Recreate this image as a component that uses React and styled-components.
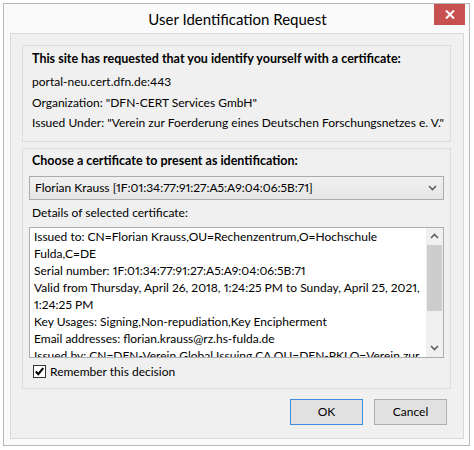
import React, { useState } from "react";
import styled, { createGlobalStyle } from "styled-components";

const GlobalStyle = createGlobalStyle`
  html, body {
    margin: 0;
    padding: 0;
    background: #ffffff;
  }
  body {
    font-family: Lato, "Open Sans", sans-serif;
    font-size: 12px;
    font-variant-numeric: proportional-nums;
    color: #000;
  }
`;

// only the lines that are visible in the details box
const details = [
  "Issued to: CN=Florian Krauss,OU=Rechenzentrum,O=Hochschule",
  "Fulda,C=DE",
  "Serial number: 1F:01:34:77:91:27:A5:A9:04:06:5B:71",
  "Valid from Thursday, April 26, 2018, 1:24:25 PM to Sunday, April 25, 2021,",
  "1:24:25 PM",
  "Key Usages: Signing,Non-repudiation,Key Encipherment",
  "Email addresses: florian.krauss@rz.hs-fulda.de",
  "Issued by: CN=DFN-Verein Global Issuing CA,OU=DFN-PKI,O=Verein zur",
];

function Chevron({ up }) {
  return (
    <svg width="9" height="6" viewBox="0 0 9 6">
      <polyline
        points={up ? "1,5 4.5,1.5 8,5" : "1,1 4.5,4.5 8,1"}
        fill="none"
        stroke="#606060"
        strokeWidth="1.6"
      />
    </svg>
  );
}

function App() {
  const [remember, setRemember] = useState(true);
  return (
    <>
      <GlobalStyle />
      <Page>
        <Window>
          <TitleBar>
            <span />
            <Title>User Identification Request</Title>
            <CloseButton aria-label="Close">
              <svg width="10" height="9" viewBox="0 0 10 9">
                <path d="M1 0.5 L9 8.5 M9 0.5 L1 8.5" stroke="#fff" strokeWidth="2" />
              </svg>
            </CloseButton>
          </TitleBar>
          <Client>
            <Group>
              <Heading>This site has requested that you identify yourself with a certificate:</Heading>
              <InfoList>
                <Info>portal-neu.cert.dfn.de:443</Info>
                <Info>Organization: "DFN-CERT Services GmbH"</Info>
                <Info>Issued Under: "Verein zur Foerderung eines Deutschen Forschungsnetzes e. V."</Info>
              </InfoList>
            </Group>
            <Group $second>
              <Heading $inset>Choose a certificate to present as identification:</Heading>
              <Select>
                <span>Florian Krauss [1F:01:34:77:91:27:A5:A9:04:06:5B:71]</span>
                <Chevron />
              </Select>
              <Label>Details of selected certificate:</Label>
              <DetailsBox>
                <DetailsText>
                  {details.map((line, i) => (
                    <div key={i}>{line}</div>
                  ))}
                </DetailsText>
                <ScrollBar>
                  <ScrollArrow>
                    <Chevron up />
                  </ScrollArrow>
                  <ScrollTrack>
                    <Thumb />
                  </ScrollTrack>
                  <ScrollArrow>
                    <Chevron />
                  </ScrollArrow>
                </ScrollBar>
              </DetailsBox>
              <CheckRow onClick={() => setRemember(!remember)}>
                <CheckBox>
                  {remember && (
                    <svg width="11" height="11" viewBox="0 0 11 11">
                      <polyline points="1.8,5.6 4.3,8.2 9.2,2.2" fill="none" stroke="#000" strokeWidth="2.1" />
                    </svg>
                  )}
                </CheckBox>
                <CheckLabel>Remember this decision</CheckLabel>
              </CheckRow>
            </Group>
            <ButtonRow>
              <Button $primary>OK</Button>
              <Button>Cancel</Button>
            </ButtonRow>
          </Client>
        </Window>
      </Page>
    </>
  );
}

const Page = styled.div`
  padding: 3px 0 0 3px;
`;

const Window = styled.div`
  box-sizing: border-box;
  width: 467px;
  height: 443px;
  border: 1px solid #b9b9b9;
  background: #fafafa;
  display: flex;
  flex-direction: column;
  padding: 0 5px 6px 6px;
`;

const TitleBar = styled.div`
  display: grid;
  grid-template-columns: 1fr auto 1fr;
  height: 29px;
  margin-right: -1px;
`;

const Title = styled.div`
  font-size: 15px;
  line-height: 29px;
  padding-top: 1px;
  color: #000;
`;

const CloseButton = styled.div`
  justify-self: end;
  align-self: start;
  width: 31px;
  height: 21px;
  background: #c75050;
  display: flex;
  align-items: center;
  justify-content: center;
`;

const Client = styled.div`
  flex: 1;
  min-width: 0;
  border: 1px solid #d9d9d9;
  background: #f0f0f0;
  padding: 11px 12px 0 11px;
  display: flex;
  flex-direction: column;
`;

const Group = styled.div`
  border: 1px solid #dcdcdc;
  display: flex;
  flex-direction: column;
  min-width: 0;
  overflow: hidden;
  padding: ${(p) => (p.$second ? "3px 6px 8px 6px" : "4px 9px 7px 9px")};
  margin-top: ${(p) => (p.$second ? "6px" : "0")};
`;

const Heading = styled.div`
  font-weight: bold;
  font-size: 12.5px;
  line-height: 18px;
  white-space: nowrap;
  padding-left: ${(p) => (p.$inset ? "3px" : "0")};
`;

const InfoList = styled.div`
  margin-top: 4px;
  display: flex;
  flex-direction: column;
`;

const Info = styled.div`
  line-height: 20.5px;
  white-space: nowrap;
`;

const Select = styled.div`
  margin-top: 6px;
  height: 24px;
  box-sizing: border-box;
  border: 1px solid #acacac;
  background: linear-gradient(#f0f0f0, #e5e5e5);
  display: flex;
  align-items: center;
  justify-content: space-between;
  padding: 0 6px 0 5px;
  white-space: nowrap;
`;

const Label = styled.div`
  margin-top: 4px;
  line-height: 18px;
  padding-left: 3px;
`;

const DetailsBox = styled.div`
  margin-top: 5px;
  height: 131px;
  box-sizing: border-box;
  border: 1px solid #abadb3;
  background: #fff;
  display: flex;
  min-width: 0;
`;

const DetailsText = styled.div`
  flex: 1;
  min-width: 0;
  overflow: hidden;
  padding-left: 4px;
  line-height: 17px;
  white-space: nowrap;
`;

const ScrollBar = styled.div`
  width: 17px;
  flex-shrink: 0;
  background: #f0f0f0;
  display: flex;
  flex-direction: column;
`;

const ScrollArrow = styled.div`
  height: 17px;
  display: flex;
  align-items: center;
  justify-content: center;
`;

const ScrollTrack = styled.div`
  flex: 1;
  padding: 0 1px;
`;

const Thumb = styled.div`
  height: 66px;
  background: #cdcdcd;
`;

const CheckRow = styled.div`
  margin-top: 5px;
  height: 17px;
  display: flex;
  align-items: center;
  gap: 4px;
  padding-left: 4px;
  cursor: default;
`;

const CheckBox = styled.div`
  width: 13px;
  height: 13px;
  flex-shrink: 0;
  box-sizing: border-box;
  border: 1px solid #333;
  background: #fff;
  display: flex;
  align-items: center;
  justify-content: center;
`;

const CheckLabel = styled.span`
  line-height: 17px;
`;

const ButtonRow = styled.div`
  margin-top: 10px;
  display: flex;
  justify-content: flex-end;
  gap: 11px;
  padding-right: 4px;
`;

const Button = styled.div`
  width: 73px;
  height: 26px;
  box-sizing: border-box;
  border: 1px solid ${(p) => (p.$primary ? "#3c8ee0" : "#adadad")};
  background: #e1e1e1;
  display: flex;
  align-items: center;
  justify-content: center;
  font-size: 12px;
`;

export default App;
